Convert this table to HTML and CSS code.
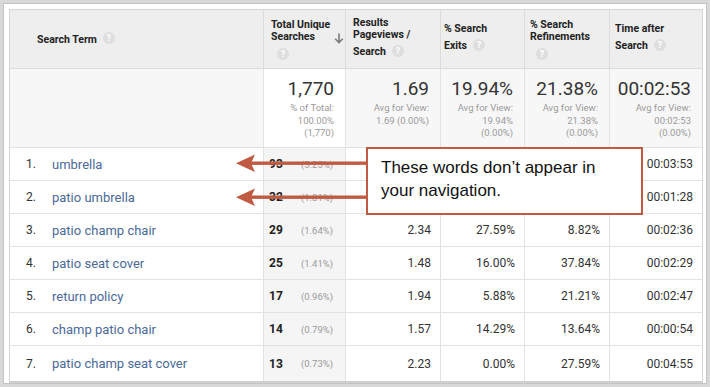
FILE: index.html
```html
<!DOCTYPE html>
<html>
<head>
<meta charset="utf-8">
<link rel="stylesheet" href="styles.css">
</head>
<body>
<div class="frame">
  <div class="table">
    <div class="row head">
      <div class="cell c1 h1"><span class="bold">Search Term</span><span class="help">?</span></div>
      <div class="cell c2 hsort">
        <div class="htext">Total Unique<br>Searches<br><span class="help hb">?</span></div>
        <svg class="sorticon" width="10" height="11" viewBox="0 0 10 11"><path d="M5 0.5 V9.5 M1.2 5.8 L5 9.6 L8.8 5.8" fill="none" stroke="#7a7a7a" stroke-width="1.6"/></svg>
      </div>
      <div class="cell c3"><div class="htext">Results<br>Pageviews /<br><span class="icline">Search<span class="help">?</span></span></div></div>
      <div class="cell c4"><div class="htext">% Search<br><span class="icline">Exits<span class="help">?</span></span></div></div>
      <div class="cell c5"><div class="htext">% Search<br>Refinements<br><span class="help hb">?</span></div></div>
      <div class="cell c6"><div class="htext">Time after<br><span class="icline">Search<span class="help">?</span></span></div></div>
    </div>
    <div class="row sum">
      <div class="cell c1"></div>
      <div class="cell c2 sorted-sum"><div class="big">1,770</div><div class="small">% of Total:<br>100.00%<br>(1,770)</div></div>
      <div class="cell c3"><div class="big">1.69</div><div class="small">Avg for View:<br>1.69 (0.00%)</div></div>
      <div class="cell c4"><div class="big">19.94%</div><div class="small">Avg for View:<br>19.94%<br>(0.00%)</div></div>
      <div class="cell c5"><div class="big">21.38%</div><div class="small">Avg for View:<br>21.38%<br>(0.00%)</div></div>
      <div class="cell c6"><div class="big">00:02:53</div><div class="small">Avg for View:<br>00:02:53<br>(0.00%)</div></div>
    </div>
    <div class="row data">
      <div class="cell c1"><span class="rank">1.</span><span class="term">umbrella</span></div>
      <div class="cell c2 sorted"><span class="cnt">93</span><span class="pct">(5.25%)</span></div>
      <div class="cell c3 num"></div>
      <div class="cell c4 num"></div>
      <div class="cell c5 num"></div>
      <div class="cell c6 num">00:03:53</div>
    </div>
    <div class="row data">
      <div class="cell c1"><span class="rank">2.</span><span class="term">patio umbrella</span></div>
      <div class="cell c2 sorted"><span class="cnt">32</span><span class="pct">(1.81%)</span></div>
      <div class="cell c3 num"></div>
      <div class="cell c4 num"></div>
      <div class="cell c5 num"></div>
      <div class="cell c6 num">00:01:28</div>
    </div>
    <div class="row data">
      <div class="cell c1"><span class="rank">3.</span><span class="term">patio champ chair</span></div>
      <div class="cell c2 sorted"><span class="cnt">29</span><span class="pct">(1.64%)</span></div>
      <div class="cell c3 num">2.34</div>
      <div class="cell c4 num">27.59%</div>
      <div class="cell c5 num">8.82%</div>
      <div class="cell c6 num">00:02:36</div>
    </div>
    <div class="row data">
      <div class="cell c1"><span class="rank">4.</span><span class="term">patio seat cover</span></div>
      <div class="cell c2 sorted"><span class="cnt">25</span><span class="pct">(1.41%)</span></div>
      <div class="cell c3 num">1.48</div>
      <div class="cell c4 num">16.00%</div>
      <div class="cell c5 num">37.84%</div>
      <div class="cell c6 num">00:02:29</div>
    </div>
    <div class="row data">
      <div class="cell c1"><span class="rank">5.</span><span class="term">return policy</span></div>
      <div class="cell c2 sorted"><span class="cnt">17</span><span class="pct">(0.96%)</span></div>
      <div class="cell c3 num">1.94</div>
      <div class="cell c4 num">5.88%</div>
      <div class="cell c5 num">21.21%</div>
      <div class="cell c6 num">00:02:47</div>
    </div>
    <div class="row data">
      <div class="cell c1"><span class="rank">6.</span><span class="term">champ patio chair</span></div>
      <div class="cell c2 sorted"><span class="cnt">14</span><span class="pct">(0.79%)</span></div>
      <div class="cell c3 num">1.57</div>
      <div class="cell c4 num">14.29%</div>
      <div class="cell c5 num">13.64%</div>
      <div class="cell c6 num">00:00:54</div>
    </div>
    <div class="row data last">
      <div class="cell c1"><span class="rank">7.</span><span class="term">patio champ seat cover</span></div>
      <div class="cell c2 sorted"><span class="cnt">13</span><span class="pct">(0.73%)</span></div>
      <div class="cell c3 num">2.23</div>
      <div class="cell c4 num">0.00%</div>
      <div class="cell c5 num">27.59%</div>
      <div class="cell c6 num">00:04:55</div>
    </div>
  </div>

  <svg class="arrows" width="710" height="387" viewBox="0 0 710 387">
    <g fill="#c05a42" stroke="none">
      <rect x="250" y="161.5" width="118" height="3.4"/>
      <polygon points="236,163.2 255,154.5 251,163.2 255,172"/>
      <rect x="250" y="195.5" width="118" height="3.4"/>
      <polygon points="236,197.2 255,188.5 251,197.2 255,206"/>
    </g>
  </svg>
  <div class="callout">These words don’t appear in<br>your navigation.</div>
</div>
</body>
</html>
```

FILE: styles.css
```css
* { box-sizing: border-box; }
html, body { margin: 0; padding: 0; background: #fff; }
body { width: 710px; height: 387px; overflow: hidden; font-family: Roboto, "Liberation Sans", sans-serif; color: #333; }

.frame {
  position: relative;
  width: 710px;
  height: 387px;
  border: 3px solid #d8d8d8;
  box-shadow: inset 0 0 0 1px #c4c4c4;
  padding: 6px 0 0 6px;
}

.table {
  width: 694px;
  border: 1px solid #d6d6d6;
  border-bottom: 2px solid #cfcfcf;
}

.row {
  display: grid;
  grid-template-columns: 254px 82px 95px 84px 85px 92px;
  border-bottom: 1px solid #e2e2e2;
}
.row.last { border-bottom: none; height: 35px; }

.cell { border-right: 1px solid #e2e2e2; }
.cell.c6 { border-right: none; }

/* header */
.head { height: 59px; background: #eeeeee; border-bottom-color: #dcdcdc; }
.head .cell { border-right-color: #dcdcdc; display: flex; align-items: center; padding-left: 6px; font-size: 10.5px; font-weight: 700; color: #222; }
.head .c2, .head .c3 { padding-left: 7px; }
.head .c4 { padding-left: 3px; }
.head .c5, .head .c6 { padding-left: 5px; }
.head .h1 { padding-left: 27px; }
.bold { font-weight: 700; font-size: 10.5px; }
.htext { line-height: 12px; }
.icline { display: inline-block; line-height: 18px; margin-top: 2px; }

.help {
  display: inline-block;
  width: 12px; height: 12px;
  border-radius: 50%;
  background: #dedede;
  color: #fff;
  font-size: 9px;
  font-weight: 700;
  line-height: 12px;
  text-align: center;
  vertical-align: middle;
  margin-left: 6px;
  position: relative;
  top: -1px;
}
.help.hb { margin: 5px 0 0 6px; top: 0; }

.hsort { position: relative; }
.sorticon { position: absolute; left: 70px; top: 23px; }

/* summary */
.sum { height: 79px; background: #f7f7f7; }
.sum .cell { text-align: right; padding: 8px 11px 0 4px; }
.sum .sorted-sum { background: #fff; }
.big { font-size: 19px; line-height: 24px; color: #333; }
.small { font-size: 9.5px; line-height: 12.5px; color: #9a9a9a; margin-top: 1px; }

/* data */
.data { height: 33px; }
.data .cell { display: flex; align-items: center; font-size: 12px; color: #333; }
.data .c1 { padding-left: 16px; }
.rank { display: inline-block; width: 26px; font-size: 12px; color: #333; }
.term { color: #4a6a99; font-size: 13px; }
.sorted { background: #f5f5f5; padding-left: 5px; }
.cnt { font-weight: 700; font-size: 12px; color: #222; width: 32px; }
.pct { font-size: 9.5px; color: #9a9a9a; }
.num { justify-content: flex-end; padding-right: 9px; font-size: 12px; }

/* overlay */
.arrows { position: absolute; left: -3px; top: -3px; pointer-events: none; }
.callout {
  position: absolute;
  left: 363px;
  top: 144px;
  width: 277px;
  height: 68px;
  background: #fff;
  border: 2.5px solid #c05a42;
  padding: 7px 0 0 13px;
  font-family: "Liberation Sans", Arial, sans-serif;
  font-size: 17px;
  line-height: 23px;
  color: #111;
}
```
